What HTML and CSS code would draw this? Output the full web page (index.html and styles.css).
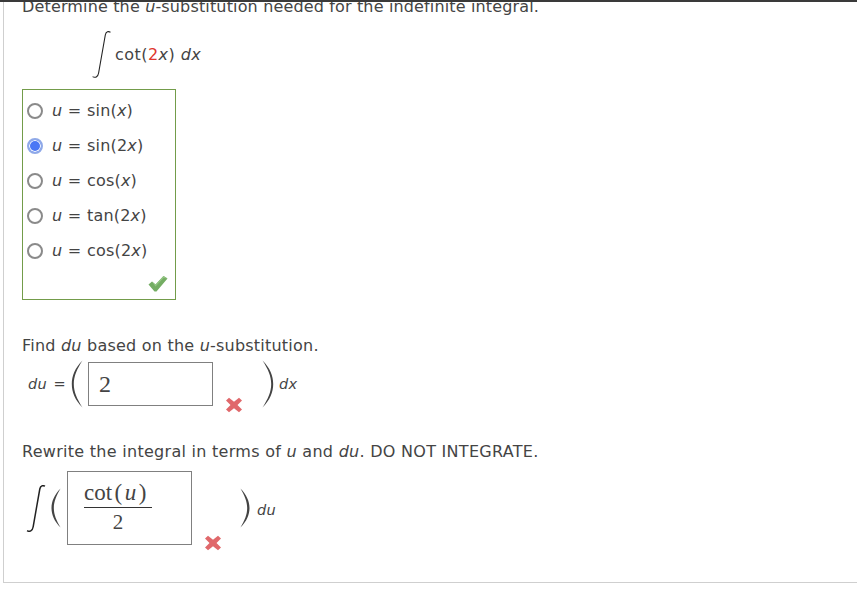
FILE: index.html
```html
<!DOCTYPE html>
<html lang="en">
<head>
<meta charset="utf-8">
<title>u-substitution</title>
<link rel="stylesheet" href="styles.css">
</head>
<body>
<main class="panel">
  <div class="clip"><p class="line first">Determine the <i>u</i>-substitution needed for the indefinite integral.</p></div>
  <div class="integral-row">
    <svg class="int-big" width="19" height="47" viewBox="0 0 19 47" role="img" aria-label="integral"><path d="M18.5 1.2 C16.5 .2 14 .3 13.3 4 L6.6 42 C6 46 3 47.2 .6 45.6" fill="none" stroke="#222" stroke-width="1.1"/></svg>
    <span class="expr"><span class="fn">cot(<span class="red">2</span><i>x</i>)</span> <i>dx</i></span>
  </div>
  <div class="choices">
    <div class="choice"><span class="radio"></span><span class="expr"><i>u</i><span class="eq">=</span>sin(<i>x</i>)</span></div>
    <div class="choice"><span class="radio on"></span><span class="expr"><i>u</i><span class="eq">=</span>sin(2<i>x</i>)</span></div>
    <div class="choice"><span class="radio"></span><span class="expr"><i>u</i><span class="eq">=</span>cos(<i>x</i>)</span></div>
    <div class="choice"><span class="radio"></span><span class="expr"><i>u</i><span class="eq">=</span>tan(2<i>x</i>)</span></div>
    <div class="choice"><span class="radio"></span><span class="expr"><i>u</i><span class="eq">=</span>cos(2<i>x</i>)</span></div>
    <svg class="check" width="20" height="17" viewBox="0 0 20 17"><path d="M.5 9.5 L4 6.5 L7.5 9.5 L15.5 1 L19.5 3.5 L8.5 16.5 L6.5 16.5 Z" fill="#74ad63"/><path d="M4 6.5 L7.5 9.5 L15.5 1 L19.5 3.5 L15.5 3 L7.5 11.5 Z" fill="#93c583"/></svg>
  </div>
  <p class="line find">Find <i>du</i> based on the <i>u</i>-substitution.</p>
  <div class="du-row">
    <span class="small label"><i>du</i> <span class="eq2">=</span></span>
    <svg class="delim" width="12" height="48" viewBox="0 0 12 48"><path d="M11.5 .5 C4 8 .8 16 .8 24 C.8 32 4 40 11.5 47.5 C6 39 2.8 32 2.8 24 C2.8 16 6 9 11.5 .5 Z" fill="#444"/></svg>
    <div class="box box1"><span class="val">2</span></div>
    <svg class="cross c1" width="18" height="16" viewBox="0 0 18 16"><path d="M1 3.5 L4 .8 L9 4.8 L14 .8 L17 3.5 L12.5 8 L17 12.5 L14 15.2 L9 11.2 L4 15.2 L1 12.5 L5.5 8 Z" fill="#e0686b"/></svg>
    <svg class="delim close1" width="12" height="48" viewBox="0 0 12 48"><path d="M.5 .5 C8 8 11.2 16 11.2 24 C11.2 32 8 40 .5 47.5 C6 39 9.2 32 9.2 24 C9.2 16 6 9 .5 .5 Z" fill="#444"/></svg>
    <span class="small dx"><i>dx</i></span>
  </div>
  <p class="line rewrite">Rewrite the integral in terms of <i>u</i> and <i>du</i>. DO NOT INTEGRATE.</p>
  <div class="final-row">
    <svg class="int-small" width="20" height="47" viewBox="0 0 19 47" role="img" aria-label="integral"><path d="M18.5 1.2 C16.5 .2 14 .3 13.3 4 L6.6 42 C6 46 3 47.2 .6 45.6" fill="none" stroke="#222" stroke-width="1.5"/></svg>
    <svg class="delim open2" width="10" height="48" viewBox="0 0 12 48"><path d="M11.5 .5 C4 8 .6 16 .6 24 C.6 32 4 40 11.5 47.5 C6.5 39 3.4 32 3.4 24 C3.4 16 6.5 9 11.5 .5 Z" fill="#444"/></svg>
    <div class="box box2">
      <div class="frac">
        <span class="num">cot<span class="mp">(</span><i>u</i><span class="mp">)</span></span>
        <span class="den">2</span>
      </div>
    </div>
    <svg class="cross c2" width="18" height="16" viewBox="0 0 18 16"><path d="M1 3.5 L4 .8 L9 4.8 L14 .8 L17 3.5 L12.5 8 L17 12.5 L14 15.2 L9 11.2 L4 15.2 L1 12.5 L5.5 8 Z" fill="#e0686b"/></svg>
    <svg class="delim close2" width="10" height="48" viewBox="0 0 12 48"><path d="M.5 .5 C8 8 11.4 16 11.4 24 C11.4 32 8 40 .5 47.5 C5.5 39 8.6 32 8.6 24 C8.6 16 5.5 9 .5 .5 Z" fill="#444"/></svg>
    <span class="small du"><i>du</i></span>
  </div>
</main>
</body>
</html>
```
FILE: styles.css
```css
html, body {
  margin: 0;
  padding: 0;
  background: #fff;
}
body {
  height: 602px;
  overflow: hidden;
  border-top: 2px solid #3a3a3a;
  box-sizing: border-box;
  font-family: "DejaVu Sans", Verdana, sans-serif;
  color: #444;
}
.panel {
  margin-left: 3px;
  height: 581px;
  box-sizing: border-box;
  border-left: 1px solid #cfcfcf;
  border-bottom: 1px solid #cfcfcf;
  padding-left: 18px;
}
.line {
  margin: 0;
  font-size: 16px;
  line-height: 20px;
  letter-spacing: 0.22px;
  white-space: nowrap;
}
.first { letter-spacing: 0.15px; }
.clip {
  height: 15px;
  overflow: hidden;
  display: flex;
  align-items: flex-end;
}
.integral-row {
  display: flex;
  align-items: center;
  box-sizing: border-box;
  height: 72px;
  padding: 2px 0 0 70px;
}
.int-big {
  flex: none;
  margin-right: 4px;
}
.expr {
  font-size: 16px;
  letter-spacing: 0.2px;
  white-space: nowrap;
}
.integral-row .expr { letter-spacing: 0.45px; }
.red { color: #e0352b; }
.choices {
  position: relative;
  width: 152px;
  height: 206px;
  border: 1px solid #739c4a;
  padding-top: 3px;
}
.choice {
  display: flex;
  align-items: center;
  height: 35px;
  padding-left: 4px;
  gap: 9px;
}
.radio {
  width: 12px;
  height: 12px;
  border: 2px solid #8a8a8a;
  border-radius: 50%;
  background: #fff;
  flex: none;
}
.radio.on {
  border-color: #8fa9e8;
  background: #4a77f5;
  box-shadow: inset 0 0 0 1px #fff;
}
.eq { margin: 0 5.5px; }
.check {
  position: absolute;
  right: 7px;
  bottom: 7px;
}
.find { margin-top: 36px; }
.du-row {
  position: relative;
  display: flex;
  align-items: center;
  height: 52px;
  margin-top: 2px;
  padding-left: 6px;
}
.small {
  font-size: 14.5px;
  letter-spacing: 0.2px;
  white-space: nowrap;
}
.label { width: 43px; flex: none; }
.eq2 { margin-left: 2px; }
.delim { flex: none; }
.box {
  flex: none;
  border: 1px solid #808080;
  box-sizing: border-box;
  font-family: "Liberation Serif", serif;
}
.box1 {
  width: 125px;
  height: 44px;
  margin-left: 5px;
  display: flex;
  align-items: center;
  padding-left: 10px;
  font-size: 24px;
}
.cross { position: absolute; }
.c1 { left: 203px; top: 39px; }
.close1 { margin-left: 49px; }
.dx { margin-left: 5px; }
.rewrite { margin-top: 32px; letter-spacing: 0.28px; }
.final-row {
  position: relative;
  display: flex;
  align-items: center;
  height: 74px;
  margin-top: 9px;
  padding-left: 4px;
}
.int-small { flex: none; }
.open2 { margin-left: 5px; }
.box2 {
  width: 125px;
  height: 74px;
  margin-left: 6px;
  padding: 7px 0 0 16px;
}
.frac {
  display: flex;
  flex-direction: column;
  align-items: center;
  width: 68px;
  font-size: 23px;
}
.num {
  width: 100%;
  box-sizing: border-box;
  border-bottom: 1px solid #333;
  line-height: 28px;
}
.mp { margin: 0 2.5px; }
.den { font-size: 21px; line-height: 28px; }
.c2 { left: 182px; top: 64px; }
.close2 { margin-left: 48px; }
.du { margin: 4px 0 0 7px; }
```
